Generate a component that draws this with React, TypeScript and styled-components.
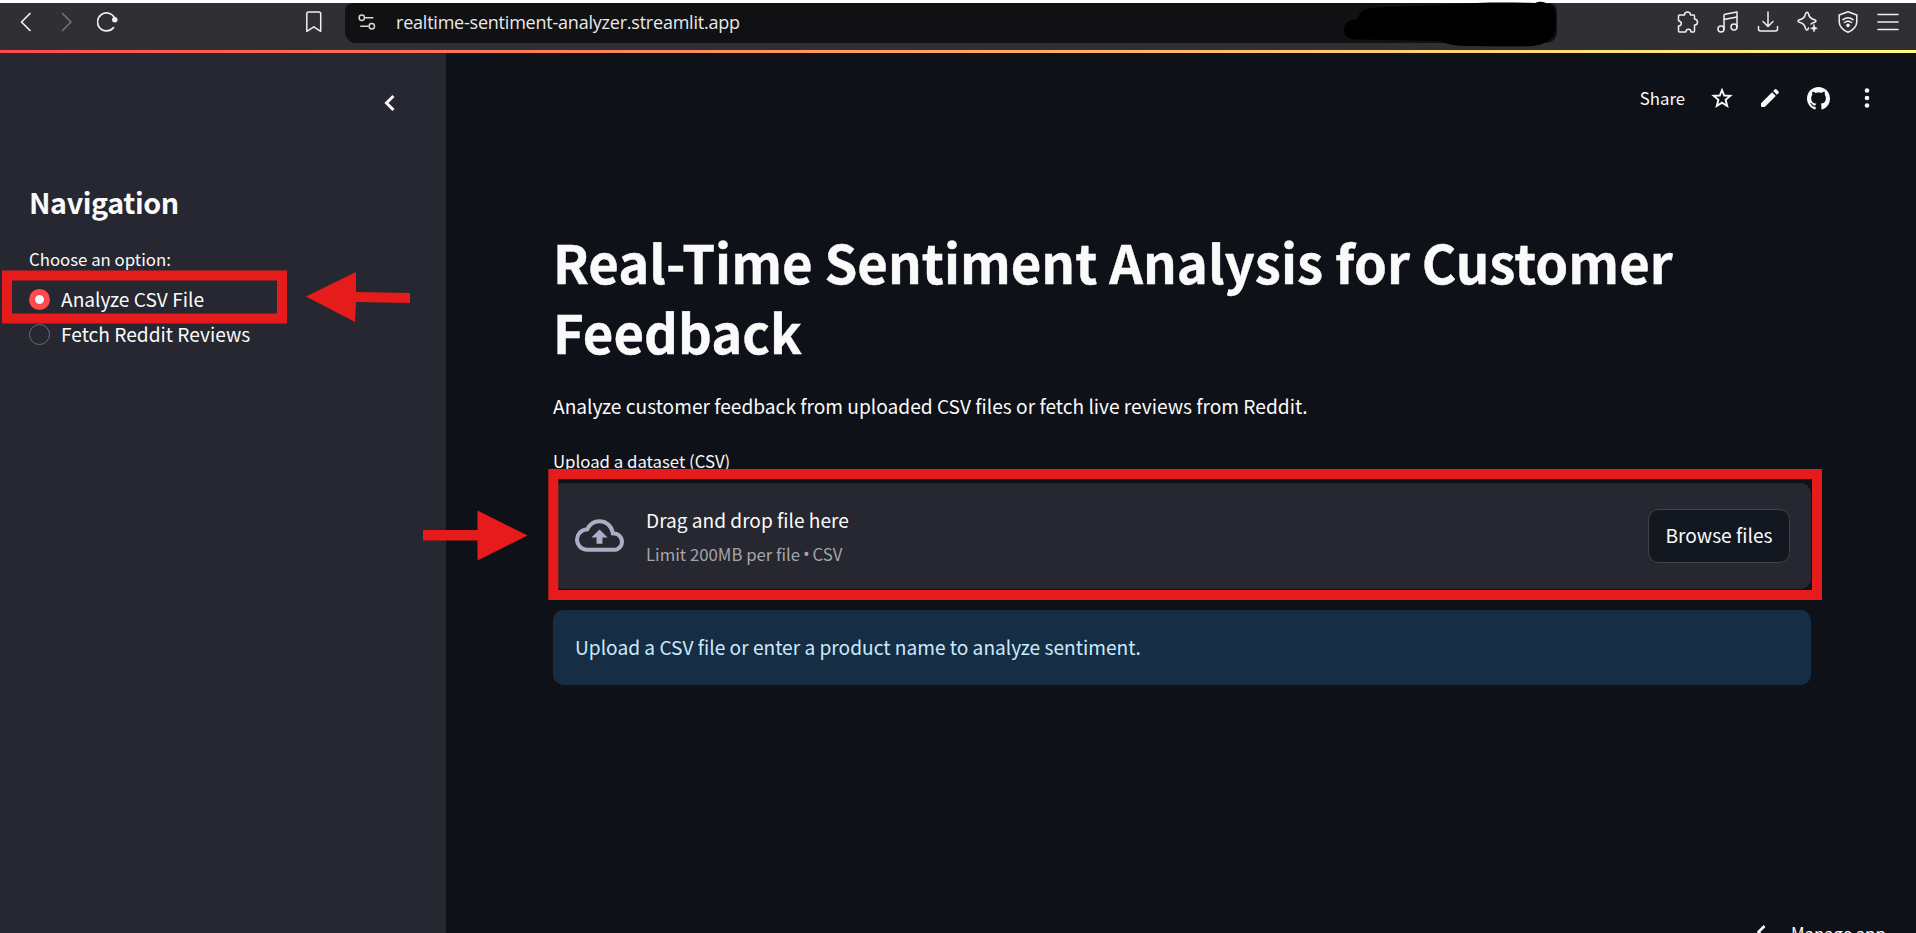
import React from "react";
import styled, { createGlobalStyle } from "styled-components";

const GlobalStyle = createGlobalStyle`
  *, *::before, *::after { box-sizing: border-box; }
  html, body { margin: 0; padding: 0; overflow: hidden; background: #0e1117; }
  body { font-family: "Noto Sans CJK SC", "Open Sans", sans-serif; color: #fafafa; }
  svg { display: block; flex: none; }
`;

const Window = styled.div`
  position: relative;
  width: 1916px;
  height: 933px;
  overflow: hidden;
  display: flex;
  flex-direction: column;
`;

const BrowserBar = styled.header`
  flex: none;
  height: 50px;
  border-top: 3px solid #ffffff;
  background: #302f33;
  display: flex;
  align-items: flex-start;
`;

const BarGroup = styled.div<{ $width: number; $pad: number; $gap?: number; $end?: number }>`
  width: ${(p) => p.$width}px;
  padding-left: ${(p) => p.$pad}px;
  padding-right: ${(p) => p.$end ?? 0}px;
  gap: ${(p) => p.$gap ?? 0}px;
  height: 38px;
  display: flex;
  align-items: center;
`;

const Spacer = styled.div`
  flex: 1;
`;

const AddressBar = styled.div`
  width: 1212px;
  height: 40px;
  padding: 0 0 1px 13px;
  border-radius: 8px 8px 11px 11px;
  background: #111113;
  display: flex;
  align-items: center;
  gap: 20px;
`;

const Address = styled.span`
  font-family: "Open Sans", "Noto Sans", sans-serif;
  font-size: 18px;
  line-height: 24px;
  padding-bottom: 2px;
  letter-spacing: -0.22px;
  color: #e9e9ea;
  white-space: nowrap;
`;

const Rainbow = styled.div`
  flex: none;
  height: 3px;
  background: linear-gradient(90deg, #ff4b4b, #fffd80);
`;

const Page = styled.div`
  flex: 1;
  min-height: 0;
  display: flex;
`;

const Sidebar = styled.aside`
  width: 446px;
  flex: none;
  background: #262730;
  padding: 41px 29px 0;
`;

const CollapseRow = styled.div`
  display: flex;
  justify-content: flex-end;
  height: 89px;
  padding-right: 20px;
`;

const NavTitle = styled.h2`
  margin: 0 0 24px;
  font-size: 28.7px;
  line-height: 38px;
  letter-spacing: -0.4px;
  font-weight: 600;
  white-space: nowrap;
`;

const Label = styled.div`
  font-size: 16.8px;
  line-height: 28px;
  white-space: nowrap;
`;

const Options = styled.div`
  padding-top: 9px;
  display: flex;
  flex-direction: column;
`;

const Option = styled.label`
  height: 34.7px;
  display: flex;
  align-items: center;
  gap: 11px;
  font-size: 19.15px;
  line-height: 34px;
  white-space: nowrap;
`;

const RadioDot = styled.span<{ $on?: boolean }>`
  width: 21px;
  height: 21px;
  border-radius: 50%;
  border: ${(p) => (p.$on ? "6.5px solid #ff4b4b" : "1px solid #6c6d75")};
  background: ${(p) => (p.$on ? "#f0f2f6" : "#262730")};
`;

const Main = styled.main`
  flex: 1;
  display: flex;
  flex-direction: column;
`;

const Actions = styled.div`
  height: 90px;
  padding-right: 37px;
  display: flex;
  justify-content: flex-end;
  align-items: center;
`;

const Share = styled.span`
  font-size: 16.8px;
  line-height: 28px;
  margin-right: 25px;
`;

const ActionIcon = styled.span`
  width: 24px;
  height: 24px;
  margin-left: 24.3px;
  display: flex;
  align-items: center;
  justify-content: center;
  &:nth-of-type(2) {
    margin-left: 0;
  }
`;

const Content = styled.section`
  width: 1258px;
  margin-left: 107px;
  padding-top: 83px;
  flex: 1;
`;

const Title = styled.h1`
  margin: 0;
  font-size: 52.7px;
  line-height: 70.4px;
  font-weight: 700;
  -webkit-text-stroke: 0.4px #fafafa;
`;

const Intro = styled.p`
  margin: 22px 0 24px;
  font-size: 19.15px;
  line-height: 34px;
`;

const Uploader = styled.div`
  margin-top: 8px;
  height: 106px;
  padding: 0 21px 0 22px;
  border-radius: 10.7px;
  background: #262730;
  display: flex;
  align-items: center;
`;

const UploadText = styled.div`
  margin-left: 22px;
  padding-top: 3px;
  flex: 1;
`;

const UploadTitle = styled.div`
  font-size: 19.1px;
  line-height: 34px;
`;

const UploadHint = styled.div`
  font-size: 16.75px;
  line-height: 34px;
  color: #a5a5a9;
`;

const Bullet = styled.span`
  font-family: "Open Sans", sans-serif;
  font-size: 18px;
  line-height: 0;
  margin: 0 -1px;
`;

const BrowseButton = styled.button`
  width: 142px;
  height: 54px;
  padding: 0 0 1px;
  border: 1px solid #41434a;
  border-radius: 10.7px;
  background: #131720;
  color: #fafafa;
  font-family: inherit;
  font-size: 19.15px;
  line-height: 34px;
  white-space: nowrap;
`;

const Info = styled.div`
  margin-top: 21px;
  height: 75px;
  padding-left: 22px;
  border-radius: 10.7px;
  background: #172d43;
  color: #c7ebff;
  display: flex;
  align-items: center;
  font-size: 19.15px;
  line-height: 34px;
`;

const ManageApp = styled.div`
  height: 14px;
  padding-left: 1309px;
  display: flex;
  align-items: flex-start;
  gap: 22px;
  font-size: 16.7px;
  line-height: 28px;
  white-space: nowrap;
`;

const Annotations = styled.svg`
  position: absolute;
  left: 0;
  top: 0;
`;

type IconProps = { children: React.ReactNode; w?: number; h?: number; sw?: number; color?: string };

const Line = ({ children, w = 22, h = 22, sw = 1.5, color = "#f0f0f0" }: IconProps) => (
  <svg width={w} height={h} viewBox={`0 0 ${w} ${h}`} fill="none" stroke={color} strokeWidth={sw} strokeLinecap="round" strokeLinejoin="round">
    {children}
  </svg>
);

const Solid = ({ size, d, box = 24, color = "#fafafa" }: { size: number; d: string; box?: number; color?: string }) => (
  <svg width={size} height={size} viewBox={`0 0 ${box} ${box}`} fill={color}>
    <path d={d} />
  </svg>
);

const CLOUD =
  "M19.35 10.04A7.49 7.49 0 0012 4C9.11 4 6.6 5.64 5.35 8.04A5.994 5.994 0 000 14c0 3.31 2.69 6 6 6h13c2.76 0 5-2.24 5-5 0-2.64-2.05-4.78-4.65-4.96zM19 18H6c-2.21 0-4-1.79-4-4 0-2.05 1.53-3.76 3.56-3.97l1.07-.11.5-.95A5.469 5.469 0 0112 6c2.62 0 4.88 1.86 5.39 4.43l.3 1.5 1.53.11A2.98 2.98 0 0122 15c0 1.65-1.35 3-3 3zM8 13h2.55v3h2.9v-3H16l-4-4z";
const PENCIL =
  "M3 17.25V20.2c0 .5.3.8.8.8h2.95L17.81 9.94l-3.75-3.75L3 17.25zM20.71 7.04a.996.996 0 000-1.41l-2.34-2.34a.996.996 0 00-1.41 0l-1.83 1.83 3.75 3.75 1.83-1.83z";
const GITHUB =
  "M8 0C3.58 0 0 3.58 0 8c0 3.54 2.29 6.53 5.47 7.59.4.07.55-.17.55-.38 0-.19-.01-.82-.01-1.49-2.01.37-2.53-.49-2.69-.94-.09-.23-.48-.94-.82-1.13-.28-.15-.68-.52-.01-.53.63-.01 1.08.58 1.23.82.72 1.21 1.87.87 2.33.66.07-.52.28-.87.51-1.07-1.78-.2-3.64-.89-3.64-3.95 0-.87.31-1.59.82-2.15-.08-.2-.36-1.02.08-2.12 0 0 .67-.21 2.2.82.64-.18 1.32-.27 2-.27s1.36.09 2 .27c1.53-1.04 2.2-.82 2.2-.82.44 1.1.16 1.92.08 2.12.51.56.82 1.27.82 2.15 0 3.07-1.87 3.75-3.65 3.95.29.25.54.73.54 1.48 0 1.07-.01 1.93-.01 2.2 0 .21.15.46.55.38A8.01 8.01 0 0016 8c0-4.42-3.58-8-8-8z";

export default function App() {
  return (
    <>
      <GlobalStyle />
      <Window>
        <BrowserBar>
          <BarGroup $width={345} $pad={16} $gap={20.5} $end={23}>
            <Line w={20} sw={1.7}><path d="M14 2.5 5.5 11 14 19.5" /></Line>
            <Line w={20} sw={1.5} color="#77767a"><path d="M5.5 2.5 14 11 5.5 19.5" /></Line>
            <Line w={22} sw={1.7}>
              <path d="M17.6 7A9 9 0 1 0 16.5 16.6" />
              <circle cx="17.8" cy="8.8" r="1.9" fill="#f0f0f0" />
            </Line>
            <Spacer />
            <Line w={16} h={22}>
              <path d="M.8 2.8Q.8 1 2.6 1H12.9Q14.7 1 14.7 2.8V20.3L7.8 15.8 .8 20.3Z" />
            </Line>
          </BarGroup>
          <AddressBar>
            <Line w={18} h={18} color="#d8d8d8">
              <circle cx="3.8" cy="3.8" r="2.7" /><path d="M7.5 3.8H14.8" />
              <circle cx="13.8" cy="12.3" r="2.7" /><path d="M2.8 12.3H10" />
            </Line>
            <Address>realtime-sentiment-analyzer.streamlit.app</Address>
          </AddressBar>
          <BarGroup $width={359} $pad={120} $gap={18}>
            <Line>
              <path d="M2.5 4H7.5Q7.6 1 10.5 1T13.5 4H16.5Q17.5 4 17.5 5V8Q20.5 8.4 20.5 11.2T17.5 14V20Q17.5 21 16.5 21H14Q13.8 18.2 11.5 18.2T8.7 21H2.5Q1.5 21 1.5 20V15Q4.3 14.8 4.3 12.5T1.5 9.7V5Q1.5 4 2.5 4" />
            </Line>
            <Line>
              <circle cx="4" cy="18" r="3" /><circle cx="17" cy="16" r="3" />
              <path d="M7 18V4.5Q7 3.500 8 3.2L20 1V16M7 8.5 20 6" />
            </Line>
            <Line><path d="M11 1V15M6 10.5 11 15.5 16 10.5M1.5 15.5V18Q1.5 20 3.5 20H18.5Q20.5 20 20.5 18V15.5" /></Line>
            <Line>
              <path d="M14 13Q15 12.100 17.500 11.300Q19 10.800 19 10T17.500 8.700Q12.500 7.500 11.500 3Q11 1.200 10 1.200T8.500 3Q7.500 7.700 2.500 8.700Q1 9.200 1 10T2.500 11.300Q7.500 12.500 8.500 17.500Q9 19 10 19T11.500 17" />
              <path d="M17 13.500 18 16.300 20.500 17.300 18 18.300 17 21 16 18.300 13.500 17.300 16 16.300Z" fill="#f0f0f0" strokeWidth="0.500" />
            </Line>
            <Line>
              <path d="M11 .8 2.2 4V10.5Q2.2 17.5 11 21.2 19.8 17.5 19.8 10.5V4Z" />
              <path d="M6 8.7Q11 5 16 8.7M7.5 11.5Q11 9 14.5 11.5" /><circle cx="11" cy="14.3" r="1.1" fill="#f0f0f0" />
            </Line>
            <Line><path d="M1 3.5H21M1 11H21M1 18.5H21" /></Line>
          </BarGroup>
        </BrowserBar>
        <Rainbow />
        <Page>
          <Sidebar>
            <CollapseRow>
              <Line w={14} h={18} sw={3} color="#fafafa"><path d="M10.5 2 3.5 9 10.5 16" strokeLinecap="butt" strokeLinejoin="miter" /></Line>
            </CollapseRow>
            <NavTitle>Navigation</NavTitle>
            <Label>Choose an option:</Label>
            <Options>
              <Option><RadioDot $on />Analyze CSV File</Option>
              <Option><RadioDot />Fetch Reddit Reviews</Option>
            </Options>
          </Sidebar>
          <Main>
            <Actions>
              <Share>Share</Share>
              <ActionIcon>
                <Line w={24} h={24} sw={1.9} color="#fafafa">
                  <path d="M12 4 14.2 9.5 20.3 9.9 15.6 13.8 17.2 20 12 16.7 6.8 20 8.4 13.8 3.7 9.9 9.8 9.5Z" strokeLinejoin="miter" />
                </Line>
              </ActionIcon>
              <ActionIcon><Solid size={24} d={PENCIL} /></ActionIcon>
              <ActionIcon><Solid size={23} d={GITHUB} box={16} /></ActionIcon>
              <ActionIcon>
                <svg width="6" height="22" viewBox="0 0 6 22" fill="#fafafa">
                  <circle cx="3" cy="3.5" r="2.3" /><circle cx="3" cy="11" r="2.3" /><circle cx="3" cy="18.5" r="2.3" />
                </svg>
              </ActionIcon>
            </Actions>
            <Content>
              <Title>Real-Time Sentiment Analysis for Customer Feedback</Title>
              <Intro>Analyze customer feedback from uploaded CSV files or fetch live reviews from Reddit.</Intro>
              <Label>Upload a dataset (CSV)</Label>
              <Uploader>
                <Solid size={49} d={CLOUD} color="#a9afc4" />
                <UploadText>
                  <UploadTitle>Drag and drop file here</UploadTitle>
                  <UploadHint>Limit 200MB per file <Bullet>•</Bullet> CSV</UploadHint>
                </UploadText>
                <BrowseButton>Browse files</BrowseButton>
              </Uploader>
              <Info>Upload a CSV file or enter a product name to analyze sentiment.</Info>
            </Content>
            <ManageApp>
              <Line w={14} h={18} sw={2.6} color="#fafafa"><path d="M9.5 7 3.5 13 9.5 19" strokeLinecap="butt" /></Line>
              <span>Manage app</span>
            </ManageApp>
          </Main>
        </Page>
        <Annotations width="1916" height="933" viewBox="0 0 1916 933" fill="#e61c1c">
          <path fill="#000000" d="M1344 30C1344 23 1348 20 1358 19C1359 12 1364 8 1376 7.5L1450 4.5C1480 2 1510 2.5 1535 3C1540 .5 1546 2 1547 4C1553 4 1556 8 1556 20C1556 32 1554 38 1548 41C1540 46 1532 46.5 1510 46.5L1466 46C1452 46 1446 43 1438 41L1360 39.5C1349 39.5 1344 37 1344 30Z" />
          <g fill="none" stroke="#e61c1c" strokeWidth="10">
            <rect x="7" y="275.5" width="275" height="43" />
            <rect x="553.3" y="474" width="1263.7" height="121" />
          </g>
          <path d="M306 296.5 356 272V292L410 293V303L356 302 355 322Z" />
          <path d="M423 530H477.5V510.5L527.5 535.5 477.5 560.5V540.5H423Z" />
        </Annotations>
      </Window>
    </>
  );
}
